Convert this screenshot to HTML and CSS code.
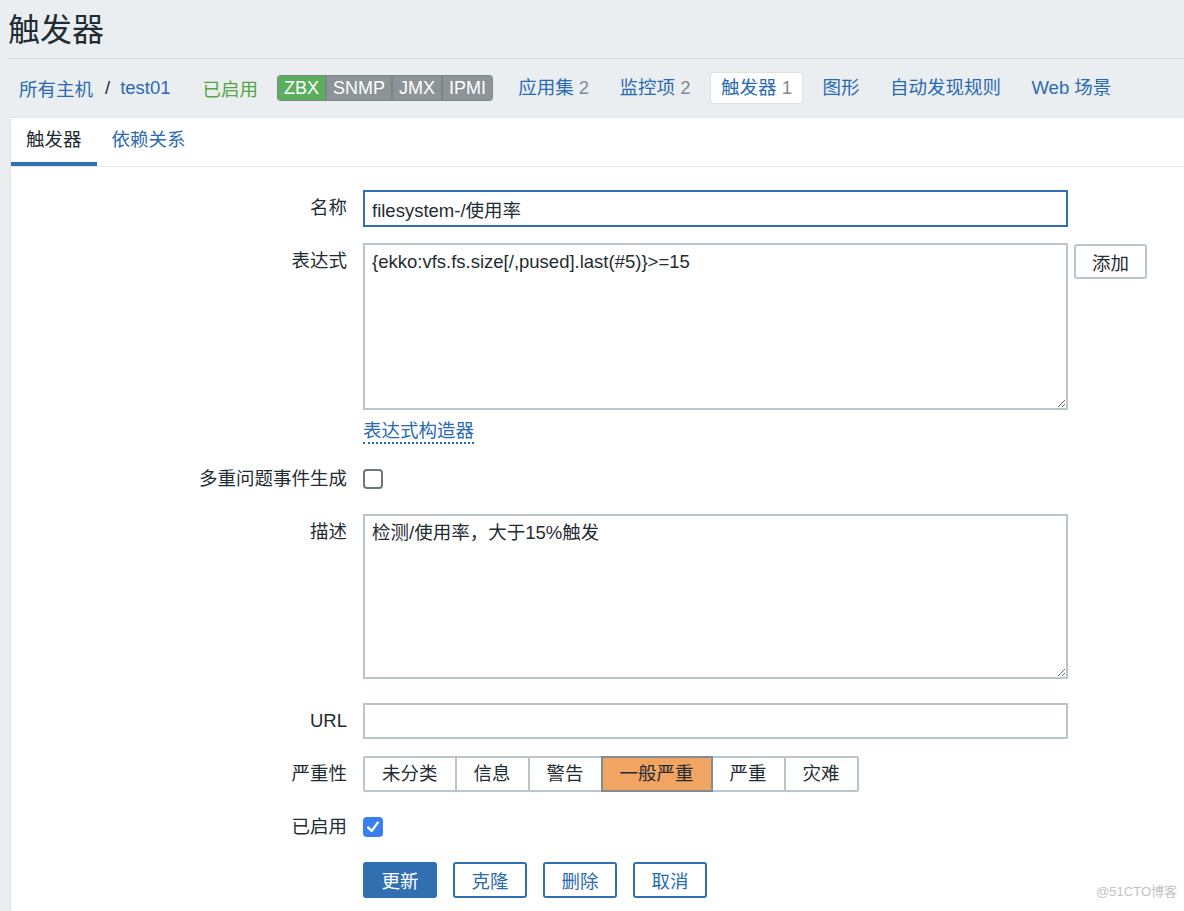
FILE: index.html
```html
<!DOCTYPE html>
<html lang="zh-CN">
<head>
<meta charset="utf-8">
<title>触发器</title>
<link rel="stylesheet" href="styles.css">
</head>
<body>
<header class="page-header"><h1 class="title">触发器</h1></header>
<nav class="host-nav">
  <a class="link crumb">所有主机</a><span class="sep">/</span><a class="link crumb">test01</a>
  <span class="status">已启用</span>
  <span class="tags"><span class="tag tag-on">ZBX</span><span class="tag">SNMP</span><span class="tag">JMX</span><span class="tag">IPMI</span></span>
  <a class="link nav-item">应用集 <span class="count">2</span></a>
  <a class="link nav-item">监控项 <span class="count">2</span></a>
  <a class="link nav-item nav-current">触发器 <span class="count">1</span></a>
  <a class="link nav-item">图形</a>
  <a class="link nav-item">自动发现规则</a>
  <a class="link nav-item">Web 场景</a>
</nav>
<main class="panel">
  <div class="tabs"><span class="tab tab-active">触发器</span><span class="tab link">依赖关系</span></div>
  <form class="form">
    <div class="row row-name">
      <label class="label">名称</label>
      <div class="field"><input class="input input-focus" type="text" value="filesystem-/使用率"></div>
    </div>
    <div class="row row-expr">
      <label class="label">表达式</label>
      <div class="field"><textarea class="textarea textarea-expr">{ekko:vfs.fs.size[/,pused].last(#5)}&gt;=15</textarea><button type="button" class="btn-add">添加</button></div>
    </div>
    <div class="row row-link">
      <span class="label"></span>
      <div class="field"><a class="link dotted">表达式构造器</a></div>
    </div>
    <div class="row row-check">
      <label class="label label-check">多重问题事件生成</label>
      <div class="field field-check"><span class="checkbox"></span></div>
    </div>
    <div class="row row-desc">
      <label class="label">描述</label>
      <div class="field"><textarea class="textarea textarea-desc">检测/使用率，大于15%触发</textarea></div>
    </div>
    <div class="row row-url">
      <label class="label">URL</label>
      <div class="field"><input class="input input-url" type="text" value=""></div>
    </div>
    <div class="row row-sev">
      <label class="label">严重性</label>
      <div class="field"><div class="sev-group"><span class="sev">未分类</span><span class="sev">信息</span><span class="sev">警告</span><span class="sev sev-on">一般严重</span><span class="sev">严重</span><span class="sev">灾难</span></div></div>
    </div>
    <div class="row row-enabled">
      <label class="label label-check">已启用</label>
      <div class="field field-check"><span class="checkbox checkbox-on"><svg viewBox="0 0 20 20" width="20" height="20"><path d="M5.2 10.6 L8.6 14 L14.8 5.6" fill="none" stroke="#fff" stroke-width="2.4" stroke-linecap="round" stroke-linejoin="round"/></svg></span></div>
    </div>
    <div class="row row-buttons">
      <span class="label"></span>
      <div class="field buttons"><button type="button" class="btn btn-primary">更新</button><button type="button" class="btn">克隆</button><button type="button" class="btn">删除</button><button type="button" class="btn">取消</button></div>
    </div>
  </form>
</main>
<div class="watermark">@51CTO博客</div>
</body>
</html>
```
FILE: styles.css
```css
html, body {
  margin: 0;
  padding: 0;
}
body {
  background: #ebeef0;
  font-family: "Liberation Sans", "Noto Sans CJK SC", sans-serif;
  color: #1f2c33;
  height: 911px;
  overflow: hidden;
  position: relative;
}
.page-header {
  margin-left: 8px;
  height: 58px;
  border-bottom: 1px solid #d6dbde;
  display: flex;
  align-items: center;
}
.title {
  margin: 0;
  font-size: 32px;
  font-weight: normal;
  line-height: 1;
  padding-top: 2px;
}
.link {
  color: #2a6ab3;
  text-decoration: none;
}
.host-nav {
  display: flex;
  align-items: center;
  height: 58px;
  padding-left: 19px;
  font-size: 18.5px;
}
.sep {
  margin: 0 10px 0 12px;
}
.status {
  color: #55a346;
  margin-left: 32px;
}
.tags {
  display: inline-flex;
  margin-left: 19px;
  border-radius: 3px;
  overflow: hidden;
  height: 24px;
  border: 1px solid #7f878b;
}
.tag {
  background: #8c9498;
  color: #fff;
  padding: 0 6px;
  line-height: 24px;
  border-left: 2px solid #7c8387;
  font-size: 18px;
}
.tag-on {
  background: #5aae5e;
  border-left: none;
  padding: 0 6px;
}
.nav-item {
  margin-left: 8.5px;
  padding: 0 10px;
  line-height: 30px;
  border: 1px solid transparent;
  border-radius: 3px;
}
.tags + .nav-item {
  margin-left: 14px;
}
.nav-current {
  background: #fff;
  border-color: #dde2e5;
}
.count {
  color: #7b8d97;
}
.panel {
  margin-left: 10px;
  background: #fff;
  border-top: 1px solid #dfe4e7;
  border-left: 1px solid #dfe4e7;
  height: 800px;
  box-sizing: border-box;
}
.tabs {
  display: flex;
  border-bottom: 1px solid #e5e9eb;
  height: 48px;
  font-size: 18.5px;
}
.tab {
  padding: 0 15px;
  line-height: 44px;
  border-bottom: 4px solid transparent;
}
.tab-active {
  border-bottom-color: #2f6fb2;
  color: #1f2c33;
}
.form {
  padding-top: 23px;
  font-size: 18.5px;
}
.row {
  display: grid;
  grid-template-columns: 336px 1fr;
  column-gap: 16px;
  align-items: start;
}
.label {
  text-align: right;
  line-height: 36px;
}
.label-check {
  line-height: 26px;
}
.field {
  display: flex;
  align-items: flex-start;
}
.field-check {
  height: 26px;
  align-items: center;
}
.input {
  box-sizing: border-box;
  width: 705px;
  height: 37px;
  border: 2px solid #b9c6cc;
  padding: 0 7px;
  font: inherit;
  color: #1f2c33;
  outline: none;
  background: #fff;
}
.input-focus {
  border-color: #3070b0;
}
.input-url {
  height: 36px;
}
.textarea {
  box-sizing: border-box;
  width: 705px;
  border: 2px solid #b9c6cc;
  padding: 6px 7px 5px;
  font: inherit;
  line-height: 22px;
  color: #1f2c33;
  outline: none;
  margin: 0;
  display: block;
}
.textarea-expr {
  height: 167px;
}
.textarea-desc {
  height: 165px;
}
.btn-add {
  margin-left: 6px;
  margin-top: 1px;
  width: 73px;
  height: 35px;
  background: #fff;
  border: 2px solid #b9c6cc;
  border-radius: 3px;
  font: inherit;
  color: #1f2c33;
  padding: 0;
}
.row-expr { margin-top: 16px; }
.row-link { margin-top: 9px; }
.row-check { margin-top: 22px; }
.row-desc { margin-top: 22px; }
.row-url { margin-top: 24px; }
.row-sev { margin-top: 17px; }
.row-enabled { margin-top: 22px; }
.row-buttons { margin-top: 22px; }
.dotted {
  line-height: 23px;
  border-bottom: 2px dotted #2a6ab3;
}
.checkbox {
  box-sizing: border-box;
  width: 20px;
  height: 20px;
  border: 2px solid #6d767b;
  border-radius: 4px;
  background: #fff;
  display: block;
}
.checkbox-on {
  border: none;
  background: #3a7ff0;
}
.checkbox-on svg {
  display: block;
}
.sev-group {
  display: flex;
}
.sev {
  height: 36px;
  box-sizing: border-box;
  border: 2px solid #b9c6cc;
  margin-left: -2px;
  padding: 0 17px;
  line-height: 32px;
  background: #fff;
  position: relative;
}
.sev:first-child {
  margin-left: 0;
  border-radius: 2px 0 0 2px;
}
.sev:last-child {
  border-radius: 0 2px 2px 0;
}
.sev-on {
  background: #f2a462;
  border-color: #7f8c94;
  z-index: 1;
}
.buttons {
  gap: 16px;
}
.btn {
  box-sizing: border-box;
  width: 74px;
  height: 36px;
  border: 2px solid #3070b0;
  border-radius: 3px;
  background: #fff;
  color: #2a6ab3;
  font: inherit;
  padding: 0;
}
.btn-primary {
  background: #3070b0;
  color: #fff;
}
.watermark {
  position: absolute;
  right: 7px;
  bottom: 11px;
  font-size: 13px;
  color: #c3c3c3;
}
```
